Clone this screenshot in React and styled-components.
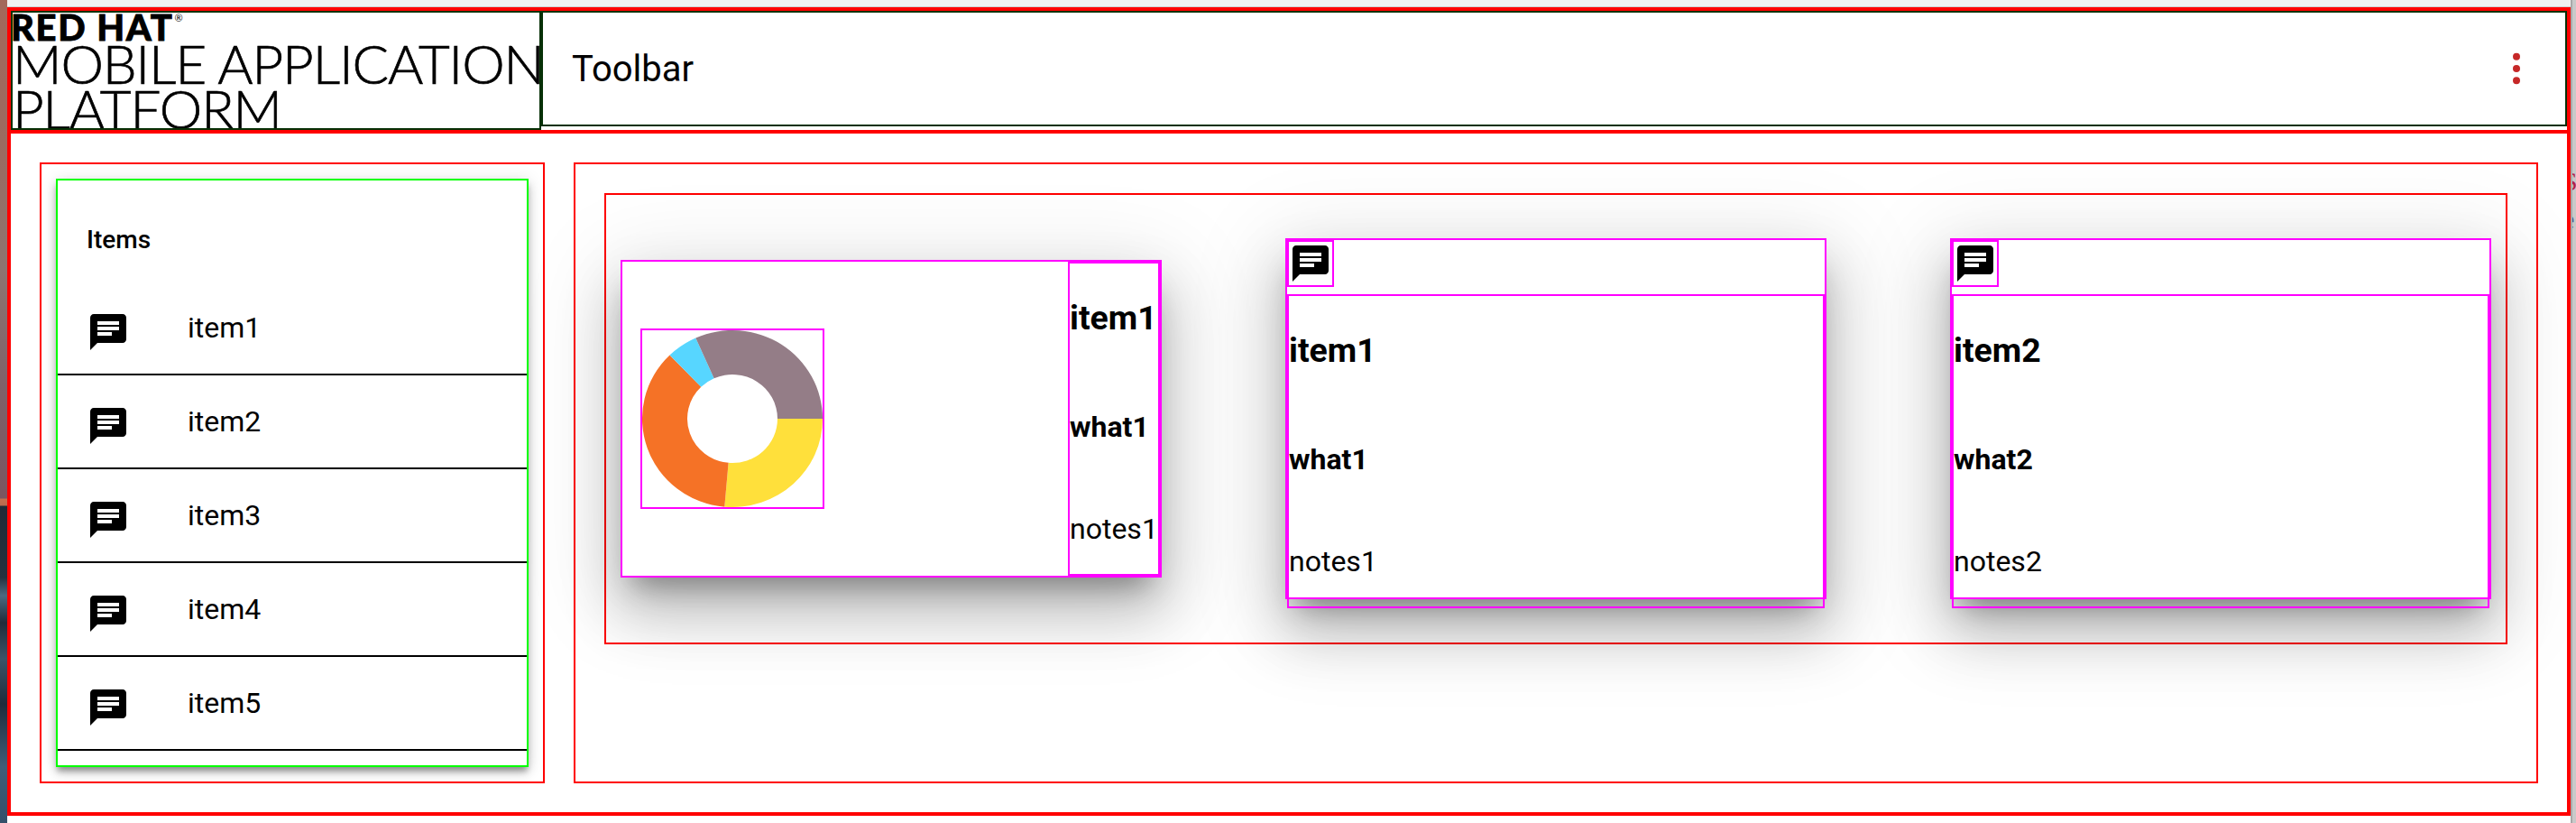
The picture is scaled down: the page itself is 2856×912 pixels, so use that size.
import React from "react";
import styled, { createGlobalStyle } from "styled-components";

const Global = createGlobalStyle`
  html, body { margin: 0; padding: 0; background: #fff; }
  * { box-sizing: border-box; }
  body { font-family: Roboto, "Liberation Sans", sans-serif; color: #000; overflow: hidden; }
`;

const Page = styled.div`
  display: grid;
  grid-template-columns: 8px 2842px 6px;
  height: 912px;
  width: 2856px;
  background: #fff;
`;

const Wallpaper = styled.div`
  background: linear-gradient(
    to bottom,
    #a3685b 0,
    #9b6b60 160px,
    #8d7470 300px,
    #7f6169 430px,
    #7a5660 552px,
    #c2704f 553px,
    #b86a4f 560px,
    #1f2a36 561px,
    #26323f 640px,
    #4c6a80 660px,
    #202c3a 690px,
    #3c5468 730px,
    #1f2c3c 780px,
    #3f5d78 850px,
    #34506a 912px
  );
`;

const Centre = styled.div`
  display: flex;
  flex-direction: column;
  min-width: 0;
`;

const TopStrip = styled.div`
  height: 8px;
  background: #f0f0f0;
  border-bottom: 1px solid #cfcfcf;
  flex: none;
`;

const Frame = styled.div`
  height: 896px;
  border: 4px solid #f00;
  display: flex;
  flex-direction: column;
`;

const SideStrip = styled.div`
  background: #c9c9c9;
  border-left: 2px solid #a9a9a9;
  overflow: hidden;
  padding-top: 180px;
  font-family: "Liberation Serif", serif;
  font-size: 30px;
  line-height: 42px;
`;

const Fragment = styled.div`
  margin-left: -11px;
  color: ${(p) => p.$color};
`;

const Header = styled.header`
  display: flex;
  align-items: flex-start;
  height: 136px;
  border-bottom: 4px solid #f00;
  flex: none;
`;

const LogoBox = styled.div`
  width: 588px;
  height: 132px;
  border: 2px solid #063006;
  overflow: hidden;
  flex: none;
  display: flex;
  flex-direction: column;
  font-family: Lato, "Liberation Sans", sans-serif;
`;

const RedHat = styled.div`
  height: 31px;
  padding-bottom: 1px;
  margin-left: -2px;
  flex: none;
  display: flex;
  align-items: flex-end;
  font-weight: 900;
  font-size: 40px;
  line-height: 28px;
  letter-spacing: 1.6px;
  -webkit-text-stroke: 0.8px #000;
  white-space: nowrap;
  sup {
    font-size: 11px;
    line-height: 11px;
    font-weight: 400;
    letter-spacing: 0;
    -webkit-text-stroke: 0;
    margin: 0 0 19px 1px;
    align-self: flex-end;
  }
`;

const LogoLine = styled.div`
  font-weight: 300;
  font-size: 60px;
  line-height: 50px;
  letter-spacing: -1.1px;
  -webkit-text-stroke: 0.7px #000;
  white-space: nowrap;
  flex: none;
`;

const Toolbar = styled.div`
  flex: 1;
  height: 128px;
  border: 2px solid #063006;
  display: flex;
  align-items: center;
  justify-content: space-between;
  padding: 0 30px 0 32px;
  font-size: 40px;
  font-weight: 400;
`;

const Content = styled.main`
  flex: 1;
  display: flex;
  gap: 32px;
  padding: 32px;
  min-height: 0;
`;

const LeftPanel = styled.section`
  width: 560px;
  flex: none;
  border: 2px solid #f00;
  padding: 16px;
  display: flex;
`;

const ListCard = styled.div`
  flex: 1;
  border: 2px solid #0f0;
  background: #fff;
  padding: 16px 0;
  box-shadow: 0 6px 6px -2px rgba(0,0,0,.3), 0 6px 10px 0 rgba(0,0,0,.16), 0 2px 18px 0 rgba(0,0,0,.12);
`;

const SubHeader = styled.div`
  height: 96px;
  padding: 0 32px;
  padding-top: 2px;
  display: flex;
  align-items: center;
  font-size: 28px;
  font-weight: 500;
`;

const Row = styled.div`
  height: 104px;
  border-bottom: 2px solid #000;
  display: flex;
  align-items: center;
  padding-left: 32px;
  font-size: 32px;
  svg { margin-top: 10px; margin-right: 64px; flex: none; }
`;

const RightPanel = styled.section`
  flex: 1;
  border: 2px solid #f00;
  padding: 32px;
  min-width: 0;
`;

const CardRow = styled.div`
  height: 500px;
  border: 2px solid #f00;
  padding: 0 16px;
  display: flex;
  align-items: center;
  justify-content: space-between;
`;

const elevation = `
  box-shadow: 0 22px 30px -14px rgba(0,0,0,.34), 0 36px 60px 4px rgba(0,0,0,.2), 0 18px 92px 16px rgba(0,0,0,.1);
`;

const WideCard = styled.article`
  width: 600px;
  height: 352px;
  flex: none;
  border: 2px solid #f0f;
  background: #fff;
  display: flex;
  ${elevation}
`;

const ChartArea = styled.div`
  flex: 1;
  display: flex;
  align-items: center;
  padding-left: 20px;
`;

const ChartBox = styled.div`
  width: 204px;
  height: 200px;
  border: 2px solid #f0f;
  svg { display: block; filter: blur(0.5px); }
`;

const TallCard = styled.article`
  width: 600px;
  height: 400px;
  flex: none;
  border: 2px solid #f0f;
  background: #fff;
  ${elevation}
`;

const CardHeader = styled.div`
  height: 60px;
`;

const AvatarBox = styled.div`
  width: 52px;
  height: 52px;
  border: 2px solid #f0f;
  svg { display: block; }
`;

const TextBox = styled.div`
  height: 348px;
  border: 2px solid #f0f;
  padding-top: 36px;
  flex: none;
  ${(p) => p.$compact && "width: 102px; overflow: visible;"}
`;

const Title = styled.div`
  font-size: 37.44px;
  font-weight: 700;
  line-height: 48px;
  white-space: nowrap;
`;

const What = styled.div`
  font-size: 32px;
  font-weight: 700;
  line-height: 40px;
  margin-top: 77px;
  white-space: nowrap;
`;

const Notes = styled.div`
  font-size: 32px;
  font-weight: 400;
  line-height: 40px;
  margin-top: 73px;
  white-space: nowrap;
`;

const ChatIcon = () => (
  <svg width="48" height="48" viewBox="0 0 24 24" fill="#000">
    <path d="M20 2H4c-1.1 0-1.99.9-1.99 2L2 22l4-4h14c1.1 0 2-.9 2-2V4c0-1.1-.9-2-2-2zM6 9h12v2H6V9zm8 5H6v-2h8v2zm4-6H6V6h12v2z" />
  </svg>
);

const MoreIcon = () => (
  <svg width="48" height="48" viewBox="0 0 48 48" fill="#c62828">
    <circle cx="24" cy="10.7" r="4" />
    <circle cx="24" cy="24" r="4" />
    <circle cx="24" cy="37.3" r="4" />
  </svg>
);

const slices = [
  { from: 0, to: 95, color: "#ffe03b" },
  { from: 95, to: 226, color: "#f57226" },
  { from: 226, to: 246, color: "#57d6ff" },
  { from: 246, to: 360, color: "#947d87" },
];

const arc = (from, to, R, r) => {
  const rad = (a) => (a * Math.PI) / 180;
  const pt = (a, q) => `${100 + q * Math.cos(rad(a))} ${98 + q * Math.sin(rad(a)) * 0.98}`;
  const large = to - from > 180 ? 1 : 0;
  return `M${pt(from, R)} A${R} ${R * 0.98} 0 ${large} 1 ${pt(to, R)} L${pt(to, r)} A${r} ${r * 0.98} 0 ${large} 0 ${pt(from, r)} Z`;
};

const Donut = () => (
  <svg width="200" height="196" viewBox="0 0 200 196">
    {slices.map((s) => (
      <path key={s.color} d={arc(s.from, s.to, 100, 50)} fill={s.color} />
    ))}
  </svg>
);

const Details = ({ item, what, notes, compact }) => (
  <TextBox $compact={compact}>
    <Title>{item}</Title>
    <What>{what}</What>
    <Notes>{notes}</Notes>
  </TextBox>
);

const DetailCard = ({ item, what, notes }) => (
  <TallCard>
    <CardHeader>
      <AvatarBox>
        <ChatIcon />
      </AvatarBox>
    </CardHeader>
    <Details item={item} what={what} notes={notes} />
  </TallCard>
);

const items = ["item1", "item2", "item3", "item4", "item5"];

export default function App() {
  return (
    <>
      <Global />
      <Page>
        <Wallpaper />
        <Centre>
          <TopStrip />
          <Frame>
            <Header>
              <LogoBox>
                <RedHat>
                  RED HAT<sup>®</sup>
                </RedHat>
                <LogoLine>MOBILE APPLICATION</LogoLine>
                <LogoLine>PLATFORM</LogoLine>
              </LogoBox>
              <Toolbar>
                <span>Toolbar</span>
                <MoreIcon />
              </Toolbar>
            </Header>
            <Content>
              <LeftPanel>
                <ListCard>
                  <SubHeader>Items</SubHeader>
                  {items.map((it) => (
                    <Row key={it}>
                      <ChatIcon />
                      <span>{it}</span>
                    </Row>
                  ))}
                </ListCard>
              </LeftPanel>
              <RightPanel>
                <CardRow>
                  <WideCard>
                    <ChartArea>
                      <ChartBox>
                        <Donut />
                      </ChartBox>
                    </ChartArea>
                    <Details item="item1" what="what1" notes="notes1" compact />
                  </WideCard>
                  <DetailCard item="item1" what="what1" notes="notes1" />
                  <DetailCard item="item2" what="what2" notes="notes2" />
                </CardRow>
              </RightPanel>
            </Content>
          </Frame>
        </Centre>
        <SideStrip>
          <Fragment $color="#b3204a">S</Fragment>
          <Fragment $color="#4a5a8a">e</Fragment>
        </SideStrip>
      </Page>
    </>
  );
}
